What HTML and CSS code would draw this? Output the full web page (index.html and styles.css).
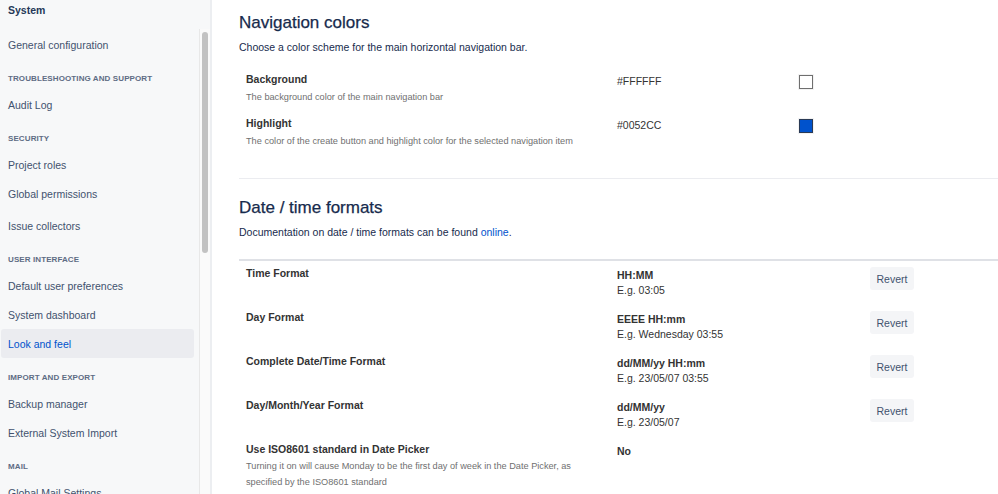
FILE: index.html
```html
<!DOCTYPE html>
<html lang="en">
<head>
<meta charset="utf-8">
<title>Look and feel</title>
<link rel="stylesheet" href="styles.css">
</head>
<body>
<div class="page">
  <aside class="sidebar">
    <div class="sidebar-scroll">
      <div class="sidebar-title">System</div>
      <nav class="nav">
        <a class="nav-item">General configuration</a>
        <div class="nav-heading">Troubleshooting and support</div>
        <a class="nav-item">Audit Log</a>
        <div class="nav-heading">Security</div>
        <a class="nav-item">Project roles</a>
        <a class="nav-item">Global permissions</a>
        <a class="nav-item nav-item-gap">Issue collectors</a>
        <div class="nav-heading">User interface</div>
        <a class="nav-item">Default user preferences</a>
        <a class="nav-item">System dashboard</a>
        <a class="nav-item nav-item-active">Look and feel</a>
        <div class="nav-heading">Import and export</div>
        <a class="nav-item">Backup manager</a>
        <a class="nav-item">External System Import</a>
        <div class="nav-heading">Mail</div>
        <a class="nav-item">Global Mail Settings</a>
      </nav>
    </div>
    <div class="scrollbar"><div class="scrollbar-thumb"></div></div>
  </aside>

  <main class="main">
    <section class="section">
      <h2 class="section-title">Navigation colors</h2>
      <p class="section-desc">Choose a color scheme for the main horizontal navigation bar.</p>
      <div class="color-table">
        <div class="color-row">
          <div class="field">
            <div class="field-label">Background</div>
            <div class="field-desc">The background color of the main navigation bar</div>
          </div>
          <div class="color-value">#FFFFFF</div>
          <div class="swatch swatch-white"></div>
        </div>
        <div class="color-row">
          <div class="field">
            <div class="field-label">Highlight</div>
            <div class="field-desc">The color of the create button and highlight color for the selected navigation item</div>
          </div>
          <div class="color-value">#0052CC</div>
          <div class="swatch swatch-blue"></div>
        </div>
      </div>
    </section>

    <hr class="divider">

    <section class="section">
      <h2 class="section-title">Date / time formats</h2>
      <p class="section-desc">Documentation on date / time formats can be found <a class="link">online</a>.</p>
      <div class="format-table">
        <div class="format-row">
          <div class="field"><div class="field-label">Time Format</div></div>
          <div class="format-value"><div class="format-pattern">HH:MM</div><div>E.g. 03:05</div></div>
          <div><button class="btn">Revert</button></div>
        </div>
        <div class="format-row">
          <div class="field"><div class="field-label">Day Format</div></div>
          <div class="format-value"><div class="format-pattern">EEEE HH:mm</div><div>E.g. Wednesday 03:55</div></div>
          <div><button class="btn">Revert</button></div>
        </div>
        <div class="format-row">
          <div class="field"><div class="field-label">Complete Date/Time Format</div></div>
          <div class="format-value"><div class="format-pattern">dd/MM/yy HH:mm</div><div>E.g. 23/05/07 03:55</div></div>
          <div><button class="btn">Revert</button></div>
        </div>
        <div class="format-row">
          <div class="field"><div class="field-label">Day/Month/Year Format</div></div>
          <div class="format-value"><div class="format-pattern">dd/MM/yy</div><div>E.g. 23/05/07</div></div>
          <div><button class="btn">Revert</button></div>
        </div>
        <div class="format-row">
          <div class="field">
            <div class="field-label">Use ISO8601 standard in Date Picker</div>
            <div class="field-desc field-desc-wrap">Turning it on will cause Monday to be the first day of week in the Date Picker, as specified by the ISO8601 standard</div>
          </div>
          <div class="format-value"><div class="format-pattern">No</div></div>
          <div></div>
        </div>
      </div>
    </section>
  </main>
</div>
</body>
</html>
```

FILE: styles.css
```css
* { box-sizing: border-box; }

html, body {
  margin: 0;
  padding: 0;
  height: 100%;
  overflow: hidden;
}

body {
  font-family: "Liberation Sans", Arial, sans-serif;
  font-size: 10.5px;
  color: #172b4d;
  background: #ffffff;
}

.page {
  display: flex;
  height: 494px;
}

/* Sidebar */
.sidebar {
  width: 212px;
  flex: none;
  display: flex;
  background: #f7f8f9;
  border-right: 2px solid #eceef1;
}

.sidebar-scroll {
  flex: 1;
  padding-left: 1px;
  padding-right: 5px;
}

.sidebar-title {
  height: 20px;
  line-height: 20px;
  padding-left: 7px;
  font-weight: bold;
  color: #253858;
  margin-bottom: 10px;
}

.nav {
  display: flex;
  flex-direction: column;
}

.nav-item {
  display: flex;
  align-items: center;
  height: 29px;
  padding-left: 7px;
  color: #42526e;
  border-radius: 3px;
}

.nav-item-gap { margin-top: 3px; }

.nav-item-active {
  background: #ebecf0;
  color: #0052cc;
}

.nav-heading {
  height: 22px;
  line-height: 22px;
  margin-top: 9px;
  padding-left: 7px;
  font-size: 8px;
  font-weight: bold;
  text-transform: uppercase;
  color: #5e6c84;
  letter-spacing: 0.1px;
}

.scrollbar {
  width: 11px;
  flex: none;
  margin-top: 29px;
  background: #fafafa;
  border-left: 1px solid #e8e8e8;
  padding: 3px 2px 0 2px;
}

.scrollbar-thumb {
  width: 6px;
  height: 221px;
  border-radius: 3px;
  background: #c2c2c2;
}

/* Main */
.main {
  flex: 1;
  padding-top: 11px;
  padding-left: 27px;
  min-width: 0;
}

.section-title {
  margin: 0 0 4px 0;
  font-size: 17px;
  font-weight: normal;
  line-height: 24px;
  color: #172b4d;
  -webkit-text-stroke: 0.25px #172b4d;
}

.section-desc {
  margin: 0;
  line-height: 16px;
  color: #172b4d;
}

.link { color: #0052cc; }

.color-table {
  margin-top: 16px;
  display: flex;
  flex-direction: column;
}

.color-row {
  display: grid;
  grid-template-columns: 378px 182px 14px;
  height: 44px;
}

.field { padding-left: 7px; }

.field-label {
  line-height: 16px;
  font-weight: bold;
  color: #333333;
}

.field-desc {
  margin-top: 2px;
  line-height: 16px;
  font-size: 9.2px;
  color: #707070;
}

.field-desc-wrap {
  margin-top: 1px;
  max-width: 345px;
}

.color-value {
  padding-top: 2px;
  line-height: 16px;
  color: #333333;
}

.swatch {
  width: 14px;
  height: 14px;
  margin-top: 4px;
  border: 1px solid #6f6f6f;
  box-shadow: 0 0 0 1px rgba(0, 0, 0, 0.05);
}

.swatch-white { background: #ffffff; }
.swatch-blue { background: #0052cc; border-color: #2a3a55; }

.divider {
  margin: 19px 0 17px 0;
  border: none;
  border-top: 1px solid #ebecf0;
  height: 0;
}

.format-table {
  margin-top: 19px;
  border-top: 2px solid #dfe1e6;
}

.format-row {
  display: grid;
  grid-template-columns: 378px 253px 44px;
  height: 44px;
  padding-top: 4px;
}

.format-value {
  padding-top: 3px;
  line-height: 15px;
  color: #333333;
}

.format-pattern { font-weight: bold; }

.btn {
  margin-top: 2px;
  width: 44px;
  height: 23px;
  border: none;
  border-radius: 3px;
  background: #f4f5f7;
  color: #42526e;
  font-family: inherit;
  font-size: 10.5px;
  padding: 0;
}
```
